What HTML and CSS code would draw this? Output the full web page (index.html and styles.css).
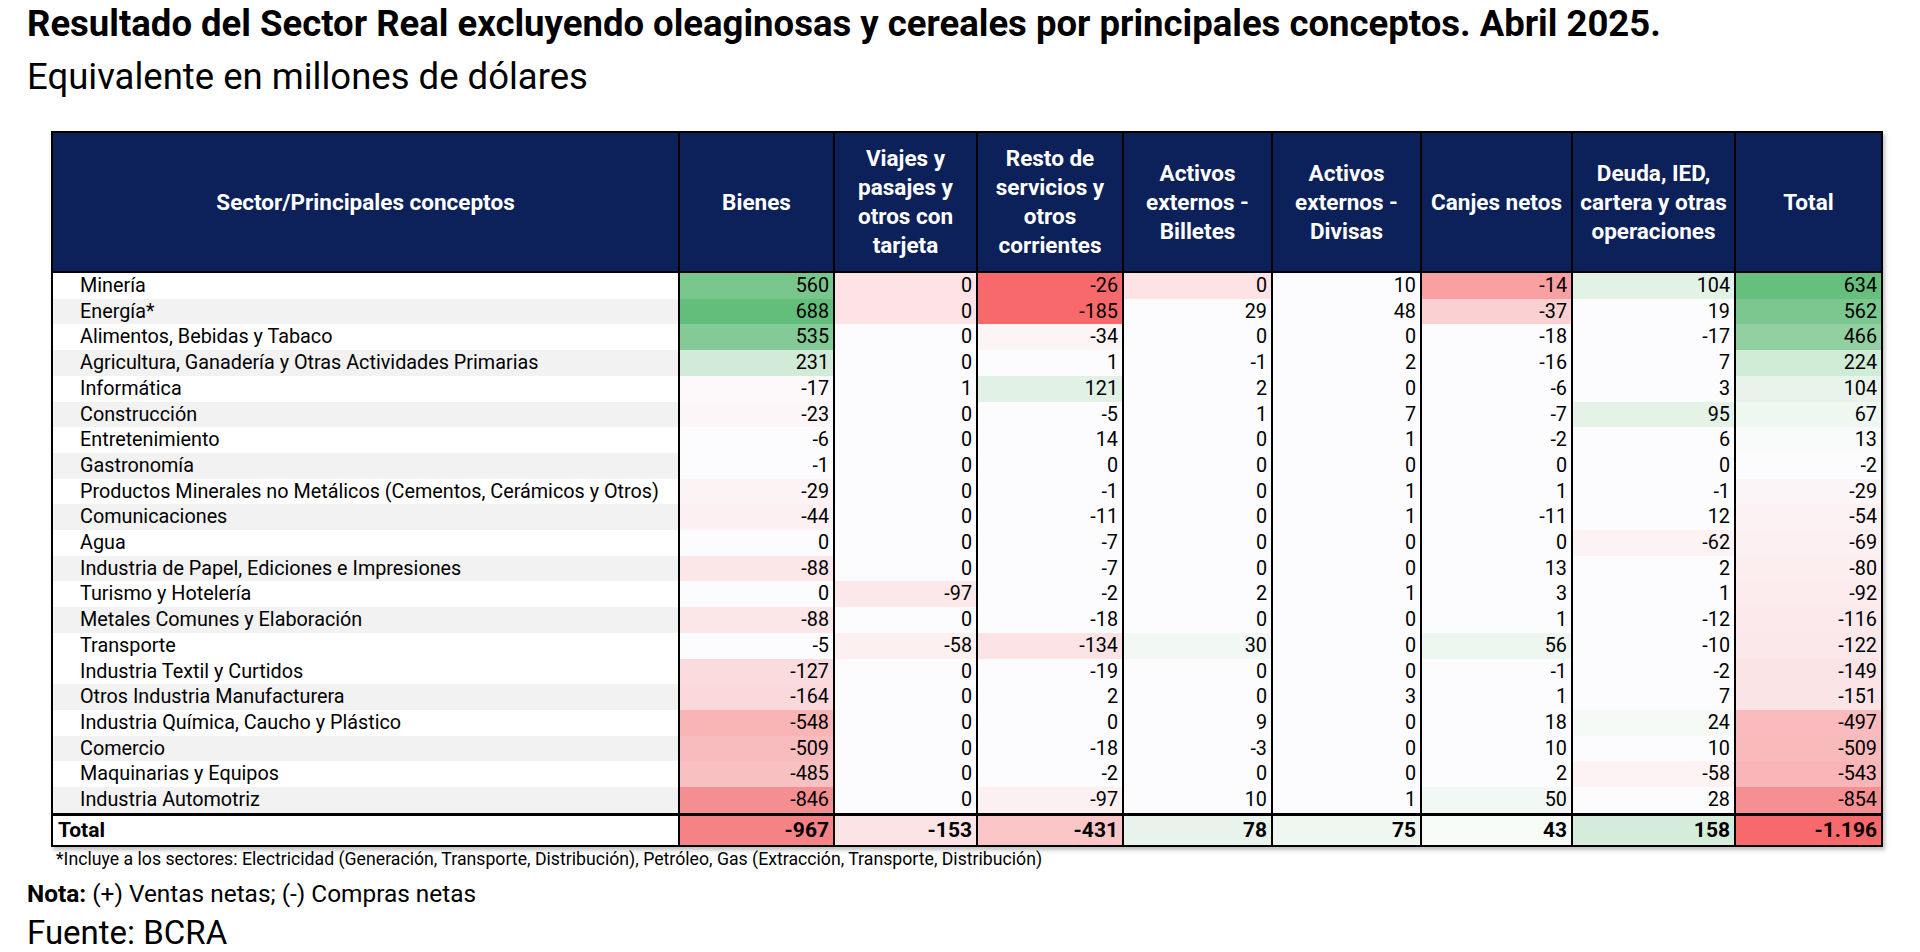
FILE: index.html
```html
<!DOCTYPE html>
<html lang="es">
<head>
<meta charset="utf-8">
<title>Resultado del Sector Real</title>
<link rel="stylesheet" href="styles.css">
</head>
<body>
<h1 class="title">Resultado del Sector Real excluyendo oleaginosas y cereales por principales conceptos. Abril 2025.</h1>
<p class="subtitle">Equivalente en millones de dólares</p>
<table class="grid">
<colgroup>
<col class="c-sector"><col class="c-bienes"><col class="c-viajes"><col class="c-resto"><col class="c-actb"><col class="c-actd"><col class="c-canjes"><col class="c-deuda"><col class="c-total">
</colgroup>
<thead>
<tr>
<th>Sector/Principales conceptos</th>
<th>Bienes</th>
<th>Viajes y pasajes y otros con tarjeta</th>
<th>Resto de servicios y otros corrientes</th>
<th>Activos externos - Billetes</th>
<th>Activos externos - Divisas</th>
<th class="nowrap">Canjes netos</th>
<th>Deuda, IED, cartera y otras operaciones</th>
<th>Total</th>
</tr>
</thead>
<tbody>
<tr><td class="sec">Minería</td><td style="background:#78c68c">560</td><td style="background:#fde3e5">0</td><td style="background:#f8696b">-26</td><td style="background:#fde3e5">0</td><td>10</td><td style="background:#f9a0a2">-14</td><td style="background:#e3f2e7">104</td><td style="background:#66bf7d">634</td></tr>
<tr class="alt"><td class="sec">Energía*</td><td style="background:#63be7b">688</td><td style="background:#fde3e5">0</td><td style="background:#f8696b">-185</td><td>29</td><td>48</td><td style="background:#fad0d2">-37</td><td>19</td><td style="background:#7cc68f">562</td></tr>
<tr><td class="sec">Alimentos, Bebidas y Tabaco</td><td style="background:#84ca97">535</td><td>0</td><td style="background:#fdf4f5">-34</td><td>0</td><td>0</td><td>-18</td><td>-17</td><td style="background:#92d0a2">466</td></tr>
<tr class="alt"><td class="sec">Agricultura, Ganadería y Otras Actividades Primarias</td><td style="background:#d2ebd8">231</td><td>0</td><td>1</td><td>-1</td><td>2</td><td>-16</td><td>7</td><td style="background:#d0ebd6">224</td></tr>
<tr><td class="sec">Informática</td><td style="background:#fcf7f9">-17</td><td>1</td><td style="background:#e2f1e6">121</td><td>2</td><td>0</td><td>-6</td><td>3</td><td style="background:#e8f4eb">104</td></tr>
<tr class="alt"><td class="sec">Construcción</td><td style="background:#fcf6f8">-23</td><td>0</td><td>-5</td><td>1</td><td>7</td><td>-7</td><td style="background:#e5f2e8">95</td><td style="background:#eef7f0">67</td></tr>
<tr><td class="sec">Entretenimiento</td><td>-6</td><td>0</td><td>14</td><td>0</td><td>1</td><td>-2</td><td>6</td><td style="background:#f8fbf9">13</td></tr>
<tr class="alt"><td class="sec">Gastronomía</td><td>-1</td><td>0</td><td>0</td><td>0</td><td>0</td><td>0</td><td>0</td><td>-2</td></tr>
<tr><td class="sec">Productos Minerales no Metálicos (Cementos, Cerámicos y Otros)</td><td style="background:#fcf3f5">-29</td><td>0</td><td>-1</td><td>0</td><td>1</td><td>1</td><td>-1</td><td style="background:#fcf5f7">-29</td></tr>
<tr class="alt"><td class="sec">Comunicaciones</td><td style="background:#fcf0f2">-44</td><td>0</td><td>-11</td><td>0</td><td>1</td><td>-11</td><td>12</td><td style="background:#fcf1f3">-54</td></tr>
<tr><td class="sec">Agua</td><td>0</td><td>0</td><td>-7</td><td>0</td><td>0</td><td>0</td><td style="background:#fdf3f4">-62</td><td style="background:#fcf0f2">-69</td></tr>
<tr class="alt"><td class="sec">Industria de Papel, Ediciones e Impresiones</td><td style="background:#fbe6e8">-88</td><td>0</td><td>-7</td><td>0</td><td>0</td><td>13</td><td>2</td><td style="background:#fcedef">-80</td></tr>
<tr><td class="sec">Turismo y Hotelería</td><td>0</td><td style="background:#fce8ea">-97</td><td>-2</td><td>2</td><td>1</td><td>3</td><td>1</td><td style="background:#fcecee">-92</td></tr>
<tr class="alt"><td class="sec">Metales Comunes y Elaboración</td><td style="background:#fbe6e8">-88</td><td>0</td><td>-18</td><td>0</td><td>0</td><td>1</td><td>-12</td><td style="background:#fbe9eb">-116</td></tr>
<tr><td class="sec">Transporte</td><td>-5</td><td style="background:#fdf0f1">-58</td><td style="background:#fce4e6">-134</td><td style="background:#f2f8f4">30</td><td>0</td><td style="background:#eef6f0">56</td><td>-10</td><td style="background:#fbe8ea">-122</td></tr>
<tr><td class="sec">Industria Textil y Curtidos</td><td style="background:#fadcdf">-127</td><td>0</td><td>-19</td><td>0</td><td>0</td><td>-1</td><td>-2</td><td style="background:#fbe4e6">-149</td></tr>
<tr class="alt"><td class="sec">Otros Industria Manufacturera</td><td style="background:#fad8db">-164</td><td>0</td><td>2</td><td>0</td><td>3</td><td>1</td><td>7</td><td style="background:#fbe4e6">-151</td></tr>
<tr><td class="sec">Industria Química, Caucho y Plástico</td><td style="background:#f9b4b6">-548</td><td>0</td><td>0</td><td>9</td><td>0</td><td>18</td><td style="background:#f6faf7">24</td><td style="background:#f9bbbd">-497</td></tr>
<tr class="alt"><td class="sec">Comercio</td><td style="background:#f9bcbe">-509</td><td>0</td><td>-18</td><td>-3</td><td>0</td><td>10</td><td>10</td><td style="background:#f9babc">-509</td></tr>
<tr><td class="sec">Maquinarias y Equipos</td><td style="background:#f9c0c2">-485</td><td>0</td><td>-2</td><td>0</td><td>0</td><td>2</td><td style="background:#fdf3f4">-58</td><td style="background:#f9b5b7">-543</td></tr>
<tr class="alt"><td class="sec">Industria Automotriz</td><td style="background:#f48e90">-846</td><td>0</td><td style="background:#fcf0f1">-97</td><td>10</td><td>1</td><td style="background:#f2f8f3">50</td><td>28</td><td style="background:#f68f91">-854</td></tr>
</tbody>
<tfoot>
<tr><td class="sec">Total</td><td style="background:#f58385">-967</td><td style="background:#fce4e6">-153</td><td style="background:#f9c5c7">-431</td><td style="background:#e8f4eb">78</td><td style="background:#eef7f0">75</td><td style="background:#f7fbf8">43</td><td style="background:#d5ecdb">158</td><td style="background:#f8696b">-1.196</td></tr>
</tfoot>
</table>
<p class="footnote">*Incluye a los sectores: Electricidad (Generación, Transporte, Distribución), Petróleo, Gas (Extracción, Transporte, Distribución)</p>
<p class="note"><b>Nota:</b> (+) Ventas netas; (-) Compras netas</p>
<p class="source">Fuente: BCRA</p>
</body>
</html>
```
FILE: styles.css
```css
html, body {
  margin: 0;
  padding: 0;
  background: #ffffff;
}
body {
  font-family: Roboto, "Liberation Sans", sans-serif;
  color: #000;
  width: 1920px;
  height: 952px;
  overflow: hidden;
}
.title {
  margin: 0;
  padding: 3px 0 0 27px;
  font-size: 36.5px;
  line-height: 42px;
  font-weight: 700;
}
.subtitle {
  margin: 0;
  padding: 11px 0 0 27px;
  font-size: 36.5px;
  line-height: 42px;
  font-weight: 400;
}
.grid {
  margin: 33px 0 0 51px;
  width: 1830px;
  table-layout: fixed;
  border-collapse: collapse;
  border: 2px solid #000;
  box-shadow: 2px 3px 4px rgba(0,0,0,0.25);
}
.c-sector { width: 627px; }
.c-bienes { width: 155px; }
.c-viajes { width: 143px; }
.c-resto { width: 146px; }
.c-actb { width: 149px; }
.c-actd { width: 149px; }
.c-canjes { width: 151px; }
.c-deuda { width: 163px; }
.c-total { width: 147px; }
.grid th {
  background: #0c2059;
  color: #fff;
  font-size: 22.5px;
  line-height: 29px;
  font-weight: 700;
  height: 138px;
  padding: 0 4px;
  border: 2px solid #000;
  text-align: center;
  vertical-align: middle;
}
.grid th.nowrap { white-space: nowrap; padding: 0; }
.grid td {
  height: 25.7px;
  padding: 0 4px 0 0;
  font-size: 19.8px;
  line-height: 25.7px;
  text-align: right;
  background: #fcfcff;
  border-left: 2px solid #000;
  white-space: nowrap;
}
.grid td.sec {
  text-align: left;
  padding-left: 27px;
  background: #ffffff;
  border-left: 0;
}
.grid tr.alt td.sec { background: #f2f2f2; }
.grid tfoot td {
  height: 29px;
  line-height: 29px;
  font-size: 21px;
  font-weight: 700;
  border-top: 3px solid #000;
}
.grid tfoot td.sec { padding-left: 5px; }
.footnote {
  margin: 1px 0 0 56px;
  font-size: 17.7px;
  line-height: 22px;
}
.note {
  margin: 10px 0 0 27px;
  font-size: 24.4px;
  line-height: 28px;
}
.source {
  margin: 7px 0 0 27px;
  font-size: 33px;
  line-height: 36px;
}
```
